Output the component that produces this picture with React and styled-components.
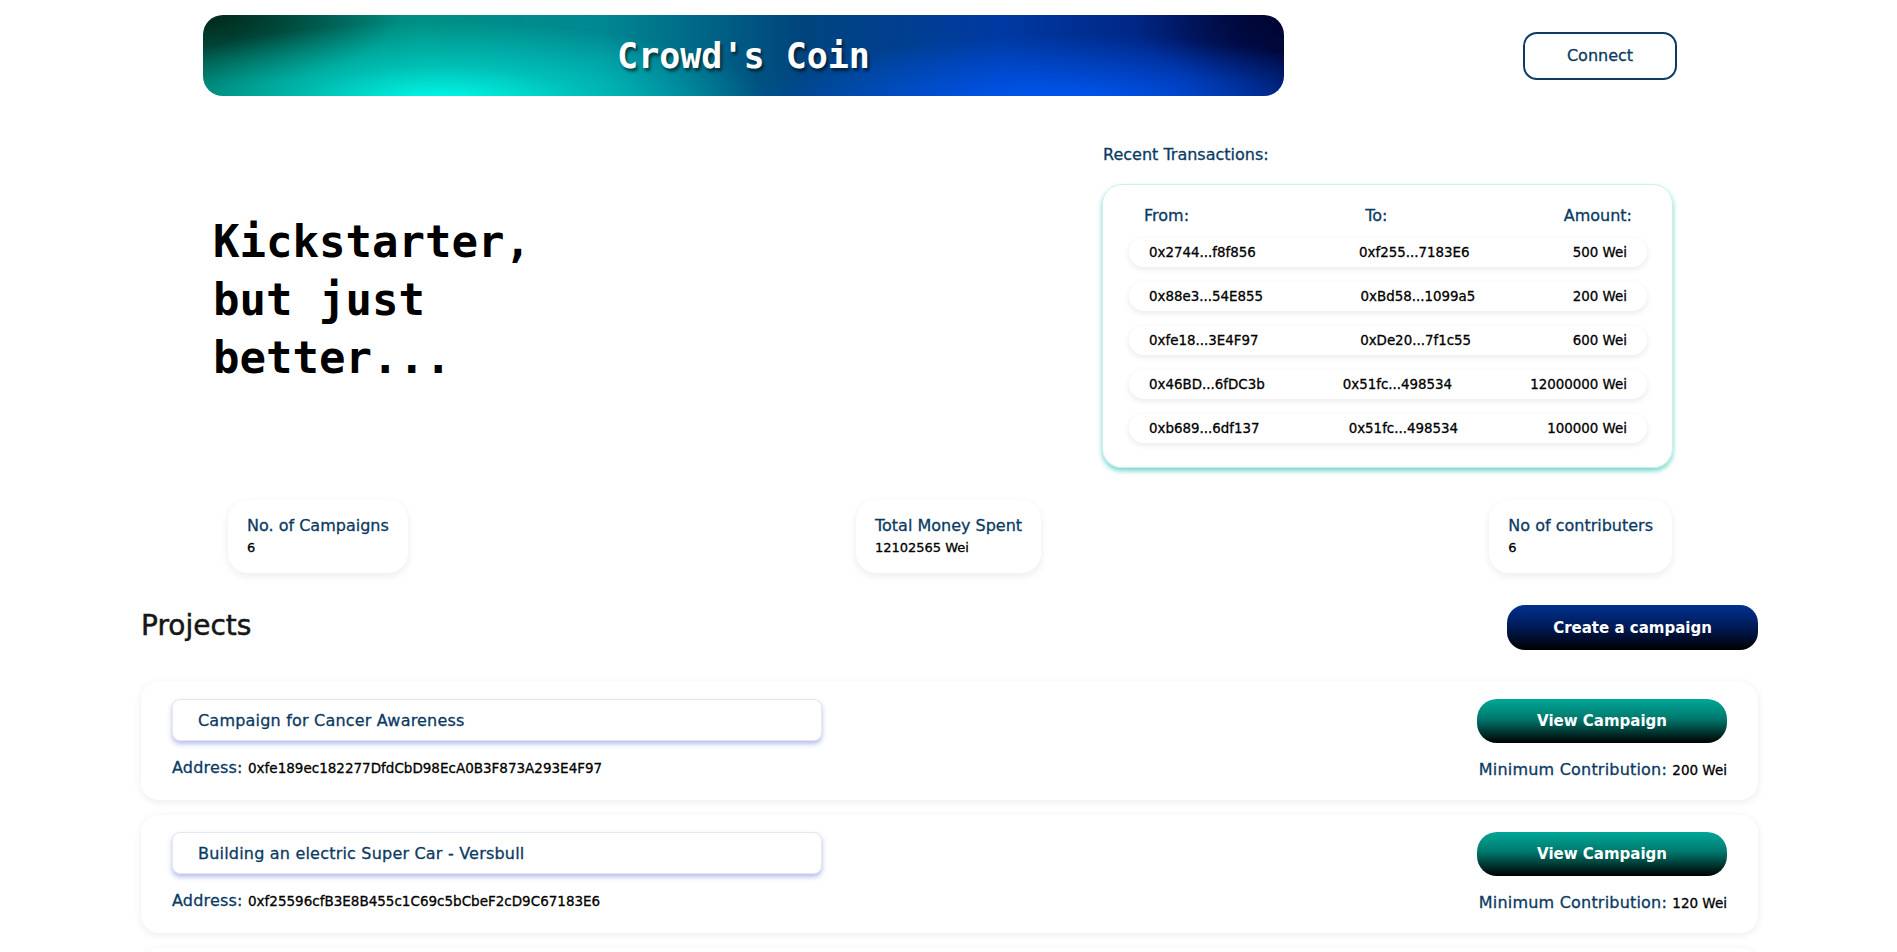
import React from "react";
import styled, { createGlobalStyle, css } from "styled-components";

const GlobalStyle = createGlobalStyle`
  * { box-sizing: border-box; }
  body {
    margin: 0;
    background: #ffffff;
    font-family: "DejaVu Sans", "Noto Sans", sans-serif;
    color: #111;
  }
`;

const NAVY = "#0b3a63";

const medium = css`
  -webkit-text-stroke: 0.3px currentColor;
`;

const Page = styled.div`
  width: 1897px;
  min-height: 952px;
  overflow: hidden;
`;

const Header = styled.header`
  display: flex;
  align-items: center;
  justify-content: space-between;
  padding: 15px 220px 0 203px;
`;

const Banner = styled.div`
  width: 1081px;
  height: 81px;
  border-radius: 20px;
  display: flex;
  align-items: center;
  justify-content: center;
  background:
    radial-gradient(ellipse 30% 100% at 22% 108%, rgba(0, 255, 236, 1) 0%, rgba(0, 232, 220, 0.55) 45%, rgba(0, 200, 200, 0) 100%),
    radial-gradient(ellipse 30% 85% at 80% 110%, rgba(0, 92, 255, 0.95) 0%, rgba(0, 80, 240, 0) 100%),
    radial-gradient(ellipse 18% 90% at 0% 0%, rgba(0, 38, 24, 1) 0%, rgba(0, 38, 24, 0) 100%),
    radial-gradient(ellipse 14% 95% at 100% 0%, rgba(0, 4, 48, 1) 0%, rgba(0, 4, 48, 0) 100%),
    linear-gradient(90deg, #006a5c 0%, #008f84 20%, #008891 37%, #00457c 55%, #0039a3 74%, #00227e 90%, #000c4a 100%);
`;

const BannerTitle = styled.h1`
  margin: 0;
  font-family: "DejaVu Sans Mono", "Liberation Mono", monospace;
  font-weight: bold;
  font-size: 35px;
  color: #ffffff;
  text-shadow: 2px 3px 3px rgba(0, 0, 0, 0.55);
`;

const ConnectButton = styled.button`
  width: 154px;
  height: 48px;
  border: 2px solid ${NAVY};
  border-radius: 14px;
  background: #ffffff;
  color: ${NAVY};
  font-family: inherit;
  font-size: 16px;
  ${medium};
  cursor: pointer;
`;

const Hero = styled.section`
  display: flex;
  justify-content: space-between;
  align-items: center;
  padding: 49px 224px 0 213px;
`;

const Tagline = styled.h2`
  margin: 0;
  padding-bottom: 14px;
  font-family: "DejaVu Sans Mono", "Liberation Mono", monospace;
  font-weight: bold;
  font-size: 44px;
  line-height: 58px;
  color: #000;
`;

const TxSection = styled.div`
  width: 571px;
  display: flex;
  flex-direction: column;
`;

const TxLabel = styled.div`
  font-size: 16px;
  line-height: 20px;
  color: ${NAVY};
  ${medium};
  padding-left: 1px;
  margin-bottom: 19px;
`;

const TxCard = styled.div`
  border: 1px solid #c9f0ec;
  border-radius: 20px;
  padding: 21px 25px 24px 26px;
  box-shadow: 0 3px 5px rgba(70, 200, 188, 0.75);
  display: flex;
  flex-direction: column;
  gap: 15px;
`;

const TxHead = styled.div`
  display: flex;
  justify-content: space-between;
  padding: 0 15px;
  margin-bottom: -3px;
  font-size: 16px;
  line-height: 20px;
  color: ${NAVY};
  ${medium};
`;

const TxRow = styled.div`
  height: 29px;
  display: flex;
  align-items: center;
  justify-content: space-between;
  padding: 0 20px;
  border-radius: 15px;
  background: #fff;
  box-shadow: 0 2px 6px rgba(0, 0, 0, 0.09);
  font-size: 13.4px;
  color: #000;
  ${medium};
`;

const StatsRow = styled.section`
  display: flex;
  justify-content: space-between;
  padding: 32px 225px 0 228px;
`;

const StatCard = styled.div`
  padding: 15px 19px 14px;
  border-radius: 20px;
  background: #fff;
  box-shadow: 0 3px 8px rgba(0, 0, 0, 0.08);
`;

const StatTitle = styled.div`
  font-size: 16px;
  line-height: 22px;
  color: ${NAVY};
  ${medium};
`;

const StatValue = styled.div`
  font-size: 13px;
  line-height: 22px;
  color: #000;
  ${medium};
`;

const Projects = styled.section`
  padding: 32px 139px 0 141px;
`;

const ProjectsHead = styled.div`
  display: flex;
  align-items: center;
  justify-content: space-between;
  margin-bottom: 32px;
`;

const ProjectsTitle = styled.h3`
  margin: 0;
  margin-top: -4px;
  font-size: 28px;
  font-weight: normal;
  -webkit-text-stroke: 0.5px currentColor;
  color: #161616;
`;

const CreateButton = styled.button`
  width: 251px;
  height: 45px;
  border: none;
  border-radius: 18px;
  background: linear-gradient(180deg, #00318f 0%, #001a55 50%, #000000 100%);
  color: #fff;
  font-family: inherit;
  font-weight: bold;
  font-size: 15px;
  cursor: pointer;
`;

const CardList = styled.div`
  display: flex;
  flex-direction: column;
  gap: 15px;
`;

const ProjectCard = styled.div`
  display: flex;
  justify-content: space-between;
  padding: 17px 31px 20px;
  border-radius: 18px;
  background: #fff;
  box-shadow: 0 2px 9px rgba(0, 0, 0, 0.08);
`;

const LeftCol = styled.div`
  display: flex;
  flex-direction: column;
`;

const RightCol = styled.div`
  display: flex;
  flex-direction: column;
  align-items: flex-end;
`;

const TitleBox = styled.div`
  width: 650px;
  height: 42px;
  display: flex;
  align-items: center;
  padding: 0 25px;
  border: 1px solid #e3e7f4;
  border-radius: 8px;
  background: #fff;
  box-shadow: 0 3px 5px rgba(95, 115, 205, 0.45);
  font-size: 16px;
  letter-spacing: 0.2px;
  color: ${NAVY};
  ${medium};
`;

const InfoLine = styled.div`
  margin-top: 17px;
  line-height: 20px;
  font-size: 16px;
  letter-spacing: 0.2px;
  color: ${NAVY};
  ${medium};
  white-space: nowrap;
`;

const InfoValue = styled.span`
  font-size: 13.5px;
  letter-spacing: 0;
  color: #000;
`;

const ViewButton = styled.button`
  width: 250px;
  height: 44px;
  border: none;
  border-radius: 20px;
  background: linear-gradient(180deg, #00a899 0%, #00786d 45%, #000000 100%);
  color: #fff;
  font-family: inherit;
  font-weight: bold;
  font-size: 15px;
  cursor: pointer;
`;

const transactions = [
  ["0x2744...f8f856", "0xf255...7183E6", "500 Wei"],
  ["0x88e3...54E855", "0xBd58...1099a5", "200 Wei"],
  ["0xfe18...3E4F97", "0xDe20...7f1c55", "600 Wei"],
  ["0x46BD...6fDC3b", "0x51fc...498534", "12000000 Wei"],
  ["0xb689...6df137", "0x51fc...498534", "100000 Wei"],
];

const stats = [
  ["No. of Campaigns", "6"],
  ["Total Money Spent", "12102565 Wei"],
  ["No of contributers", "6"],
];

const projects = [
  {
    title: "Campaign for Cancer Awareness",
    address: "0xfe189ec182277DfdCbD98EcA0B3F873A293E4F97",
    min: "200 Wei",
  },
  {
    title: "Building an electric Super Car - Versbull",
    address: "0xf25596cfB3E8B455c1C69c5bCbeF2cD9C67183E6",
    min: "120 Wei",
  },
  {
    title: "Clean Water for Rural Villages",
    address: "0x46BD3a1e0b7c9d5F2e8A4c6b1D0f3E7a9c26fDC3b",
    min: "100 Wei",
  },
];

export default function App() {
  return (
    <Page>
      <GlobalStyle />
      <Header>
        <Banner>
          <BannerTitle>Crowd's Coin</BannerTitle>
        </Banner>
        <ConnectButton>Connect</ConnectButton>
      </Header>

      <Hero>
        <Tagline>
          Kickstarter,
          <br />
          but just
          <br />
          better...
        </Tagline>
        <TxSection>
          <TxLabel>Recent Transactions:</TxLabel>
          <TxCard>
            <TxHead>
              <span>From:</span>
              <span>To:</span>
              <span>Amount:</span>
            </TxHead>
            {transactions.map(([from, to, amount]) => (
              <TxRow key={from}>
                <span>{from}</span>
                <span>{to}</span>
                <span>{amount}</span>
              </TxRow>
            ))}
          </TxCard>
        </TxSection>
      </Hero>

      <StatsRow>
        {stats.map(([title, value]) => (
          <StatCard key={title}>
            <StatTitle>{title}</StatTitle>
            <StatValue>{value}</StatValue>
          </StatCard>
        ))}
      </StatsRow>

      <Projects>
        <ProjectsHead>
          <ProjectsTitle>Projects</ProjectsTitle>
          <CreateButton>Create a campaign</CreateButton>
        </ProjectsHead>
        <CardList>
          {projects.map((p) => (
            <ProjectCard key={p.address}>
              <LeftCol>
                <TitleBox>{p.title}</TitleBox>
                <InfoLine>
                  Address: <InfoValue>{p.address}</InfoValue>
                </InfoLine>
              </LeftCol>
              <RightCol>
                <ViewButton>View Campaign</ViewButton>
                <InfoLine>
                  Minimum Contribution: <InfoValue>{p.min}</InfoValue>
                </InfoLine>
              </RightCol>
            </ProjectCard>
          ))}
        </CardList>
      </Projects>
    </Page>
  );
}
